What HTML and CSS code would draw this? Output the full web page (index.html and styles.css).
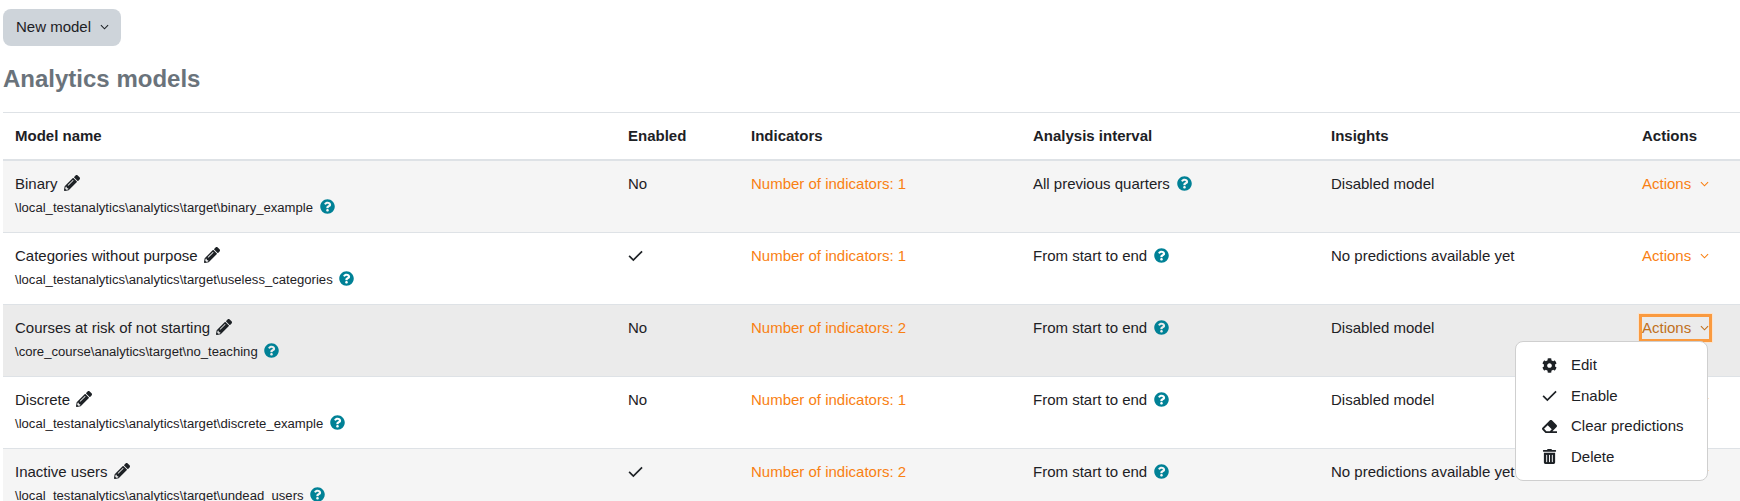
FILE: index.html
```html
<!DOCTYPE html>
<html lang="en">
<head>
<meta charset="utf-8">
<title>Analytics models</title>
<link rel="stylesheet" href="styles.css">
</head>
<body>
<svg class="sprite" xmlns="http://www.w3.org/2000/svg" aria-hidden="true">
  <symbol id="i-pencil" viewBox="0 0 512 512"><path d="M497.9 142.1l-46.1 46.1c-4.7 4.7-12.3 4.7-17 0l-111-111c-4.7-4.7-4.7-12.3 0-17l46.1-46.1c18.7-18.7 49.1-18.7 67.9 0l60.1 60.1c18.8 18.7 18.8 49.1 0 67.9zM284.2 99.8L21.6 362.4.4 483.9c-2.9 16.4 11.4 30.6 27.8 27.8l121.5-21.3 262.6-262.6c4.7-4.7 4.7-12.3 0-17l-111-111c-4.8-4.7-12.4-4.7-17.1 0zM124.1 339.9c-5.5-5.5-5.5-14.3 0-19.8l154-154c5.5-5.5 14.3-5.5 19.8 0s5.5 14.3 0 19.8l-154 154c-5.5 5.5-14.3 5.5-19.8 0zM88 424h48v36.3l-64.5 11.3-31.1-31.1L51.7 376H88v48z"/></symbol>
  <symbol id="i-help" viewBox="0 0 512 512"><path d="M504 256c0 136.997-111.043 248-248 248S8 392.997 8 256C8 119.083 119.043 8 256 8s248 111.083 248 248zM262.655 90c-54.497 0-89.255 22.957-116.549 63.758-3.536 5.286-2.353 12.415 2.715 16.258l34.699 26.31c5.205 3.947 12.621 3.008 16.665-2.122 17.864-22.658 30.113-35.797 57.303-35.797 20.429 0 45.698 13.148 45.698 32.958 0 14.976-12.363 22.667-32.534 33.976C247.128 238.528 216 254.941 216 296v4c0 6.627 5.373 12 12 12h56c6.627 0 12-5.373 12-12v-1.333c0-28.462 83.186-29.647 83.186-106.667 0-58.002-60.165-102-116.531-102zM256 338c-25.365 0-46 20.635-46 46 0 25.364 20.635 46 46 46s46-20.636 46-46c0-25.365-20.635-46-46-46z"/></symbol>
  <symbol id="i-cog" viewBox="0 0 512 512"><path d="M487.4 315.7l-42.6-24.6c4.3-23.2 4.3-47 0-70.2l42.6-24.6c4.9-2.8 7.1-8.6 5.5-14-11.1-35.6-30-67.8-54.7-94.6-3.8-4.1-10-5.1-14.8-2.3L380.8 110c-17.9-15.4-38.5-27.3-60.8-35.1V25.8c0-5.6-3.9-10.5-9.4-11.7-36.7-8.2-74.3-7.8-109.2 0-5.5 1.2-9.4 6.1-9.4 11.7V75c-22.2 7.9-42.8 19.8-60.8 35.1L88.7 85.5c-4.9-2.8-11-1.9-14.8 2.3-24.7 26.7-43.6 58.9-54.7 94.6-1.7 5.4.6 11.2 5.5 14L67.3 221c-4.3 23.2-4.3 47 0 70.2l-42.6 24.6c-4.9 2.8-7.1 8.6-5.5 14 11.1 35.6 30 67.8 54.7 94.6 3.8 4.1 10 5.1 14.8 2.3l42.6-24.6c17.9 15.4 38.5 27.3 60.8 35.1v49.2c0 5.6 3.9 10.5 9.4 11.7 36.7 8.2 74.3 7.8 109.2 0 5.5-1.2 9.4-6.1 9.4-11.7v-49.2c22.2-7.9 42.8-19.8 60.8-35.1l42.6 24.6c4.9 2.8 11 1.9 14.8-2.3 24.7-26.7 43.6-58.9 54.7-94.6 1.5-5.5-.7-11.3-5.6-14.1zM256 336c-44.1 0-80-35.9-80-80s35.9-80 80-80 80 35.9 80 80-35.9 80-80 80z"/></symbol>
  <symbol id="i-eraser" viewBox="0 0 512 512"><path d="M497.941 273.941c18.745-18.745 18.745-49.137 0-67.882l-160-160c-18.745-18.745-49.136-18.746-67.883 0l-256 256c-18.745 18.745-18.745 49.137 0 67.882l96 96A48.004 48.004 0 0 0 144 480h356c6.627 0 12-5.373 12-12v-40c0-6.627-5.373-12-12-12H355.883l142.058-142.059zm-302.627-62.627l137.373 137.373L265.373 416H150.628l-80-80 124.686-124.686z"/></symbol>
  <symbol id="i-trash" viewBox="0 0 448 512"><path d="M32 464a48 48 0 0 0 48 48h288a48 48 0 0 0 48-48V128H32zm272-256a16 16 0 0 1 32 0v224a16 16 0 0 1-32 0zm-96 0a16 16 0 0 1 32 0v224a16 16 0 0 1-32 0zm-96 0a16 16 0 0 1 32 0v224a16 16 0 0 1-32 0zM432 32H312l-9.4-18.7A24 24 0 0 0 281.1 0H166.8a23.72 23.72 0 0 0-21.4 13.3L136 32H16A16 16 0 0 0 0 48v32a16 16 0 0 0 16 16h416a16 16 0 0 0 16-16V48a16 16 0 0 0-16-16z"/></symbol>
  <symbol id="i-check" viewBox="0 0 16 16"><path d="M1.2 8.3l4.5 4.5L15 3.5" fill="none" stroke="currentColor" stroke-width="1.8"/></symbol>
  <symbol id="i-chev" viewBox="0 0 10 6"><path d="M1 1l4 4 4-4" fill="none" stroke="currentColor" stroke-width="1.2"/></symbol>
</svg>

<main class="page">
  <button class="btn-new" type="button">New model <svg class="chev"><use href="#i-chev"/></svg></button>
  <h2 class="title">Analytics models</h2>
  <table class="models">
    <colgroup>
      <col class="c-name"><col class="c-enabled"><col class="c-ind"><col class="c-int"><col class="c-ins"><col class="c-act">
    </colgroup>
    <thead>
      <tr><th>Model name</th><th>Enabled</th><th>Indicators</th><th>Analysis interval</th><th>Insights</th><th>Actions</th></tr>
    </thead>
    <tbody>
      <tr class="odd">
        <td>Binary <svg class="pencil"><use href="#i-pencil"/></svg>
          <div class="sub">\local_testanalytics\analytics\target\binary_example <svg class="help"><use href="#i-help"/></svg></div></td>
        <td>No</td>
        <td><a class="link">Number of indicators: 1</a></td>
        <td>All previous quarters <svg class="help"><use href="#i-help"/></svg></td>
        <td>Disabled model</td>
        <td><a class="link act">Actions <svg class="chev"><use href="#i-chev"/></svg></a></td>
      </tr>
      <tr>
        <td>Categories without purpose <svg class="pencil"><use href="#i-pencil"/></svg>
          <div class="sub">\local_testanalytics\analytics\target\useless_categories <svg class="help"><use href="#i-help"/></svg></div></td>
        <td><svg class="check"><use href="#i-check"/></svg></td>
        <td><a class="link">Number of indicators: 1</a></td>
        <td>From start to end <svg class="help"><use href="#i-help"/></svg></td>
        <td>No predictions available yet</td>
        <td><a class="link act">Actions <svg class="chev"><use href="#i-chev"/></svg></a></td>
      </tr>
      <tr class="hover">
        <td>Courses at risk of not starting <svg class="pencil"><use href="#i-pencil"/></svg>
          <div class="sub">\core_course\analytics\target\no_teaching <svg class="help"><use href="#i-help"/></svg></div></td>
        <td>No</td>
        <td><a class="link">Number of indicators: 2</a></td>
        <td>From start to end <svg class="help"><use href="#i-help"/></svg></td>
        <td>Disabled model</td>
        <td>
          <div class="menu-anchor">
            <a class="link act focused">Actions <svg class="chev"><use href="#i-chev"/></svg></a>
            <ul class="menu">
              <li><svg class="mi"><use href="#i-cog"/></svg>Edit</li>
              <li><svg class="mi"><use href="#i-check"/></svg>Enable</li>
              <li><svg class="mi"><use href="#i-eraser"/></svg>Clear predictions</li>
              <li><svg class="mi"><use href="#i-trash"/></svg>Delete</li>
            </ul>
          </div>
        </td>
      </tr>
      <tr>
        <td>Discrete <svg class="pencil"><use href="#i-pencil"/></svg>
          <div class="sub">\local_testanalytics\analytics\target\discrete_example <svg class="help"><use href="#i-help"/></svg></div></td>
        <td>No</td>
        <td><a class="link">Number of indicators: 1</a></td>
        <td>From start to end <svg class="help"><use href="#i-help"/></svg></td>
        <td>Disabled model</td>
        <td><a class="link act">Actions <svg class="chev"><use href="#i-chev"/></svg></a></td>
      </tr>
      <tr class="odd">
        <td>Inactive users <svg class="pencil"><use href="#i-pencil"/></svg>
          <div class="sub">\local_testanalytics\analytics\target\undead_users <svg class="help"><use href="#i-help"/></svg></div></td>
        <td><svg class="check"><use href="#i-check"/></svg></td>
        <td><a class="link">Number of indicators: 2</a></td>
        <td>From start to end <svg class="help"><use href="#i-help"/></svg></td>
        <td>No predictions available yet</td>
        <td><a class="link act">Actions <svg class="chev"><use href="#i-chev"/></svg></a></td>
      </tr>
    </tbody>
  </table>
</main>
</body>
</html>
```

FILE: styles.css
```css
html, body {
  margin: 0;
  height: 501px;
  overflow: hidden;
  background: #fff;
}
body {
  font-family: "Liberation Sans", Arial, sans-serif;
  font-size: 15px;
  line-height: 22.5px;
  color: #1d2125;
}
.sprite { display: none; }
.page { padding: 9px 0 0 3px; }

.btn-new {
  display: block;
  width: 118px;
  height: 37px;
  padding: 0 0 0 13px;
  border: 0;
  border-radius: 8px;
  background: #ced4da;
  color: #1d2125;
  font: inherit;
  text-align: left;
}
.btn-new .chev { margin-left: 5px; }

.title {
  margin: 15px 0 0;
  font-size: 24px;
  line-height: 36px;
  font-weight: 700;
  color: #6a737b;
}

.models {
  width: 100%;
  margin-top: 15px;
  table-layout: fixed;
  border-collapse: separate;
  border-spacing: 0;
}
.c-name { width: 613px; }
.c-enabled { width: 123px; }
.c-ind { width: 282px; }
.c-int { width: 298px; }
.c-ins { width: 311px; }

.models th {
  padding: 12px;
  height: 22px;
  text-align: left;
  font-weight: 700;
  border-top: 1px solid #dee2e6;
  border-bottom: 2px solid #dee2e6;
  line-height: 22px;
}
.models td {
  padding: 12px;
  height: 47px;
  vertical-align: top;
  border-bottom: 1px solid #dee2e6;
}
.odd td { background: #f5f5f5; }
.hover td { background: #ebebeb; }

.sub {
  font-size: 13.125px;
  line-height: 24.5px;
  height: 24.5px;
}
.link { color: #f98012; }
.act { display: inline-block; }

.chev {
  width: 9px;
  height: 6px;
  margin-left: 5px;
  vertical-align: 2px;
}
.pencil {
  width: 16px;
  height: 16px;
  margin-left: 2px;
  vertical-align: -2px;
  fill: #1d2125;
}
.help {
  width: 15px;
  height: 15px;
  margin-left: 3px;
  vertical-align: -2px;
  fill: #008196;
}
.check {
  width: 15px;
  height: 15px;
  vertical-align: -2px;
  color: #1d2125;
}

.menu-anchor { position: relative; }
.focused {
  color: #c0701c;
  line-height: 22px;
  box-shadow: 0 0 0 3px #fa9a3f, 0 0 0 4px #fbe3cc;
}
.menu {
  position: absolute;
  right: 20px;
  top: 24px;
  width: 191px;
  margin: 0;
  padding: 8px 0;
  list-style: none;
  background: #fff;
  border: 1px solid #cfcfcf;
  border-radius: 8px;
  z-index: 2;
}
.menu li {
  display: flex;
  align-items: center;
  height: 30.5px;
  padding: 0 0 0 26px;
  white-space: nowrap;
}
.mi {
  flex: none;
  width: 15px;
  height: 15px;
  margin-right: 14px;
  fill: #1d2125;
  color: #1d2125;
}
```
